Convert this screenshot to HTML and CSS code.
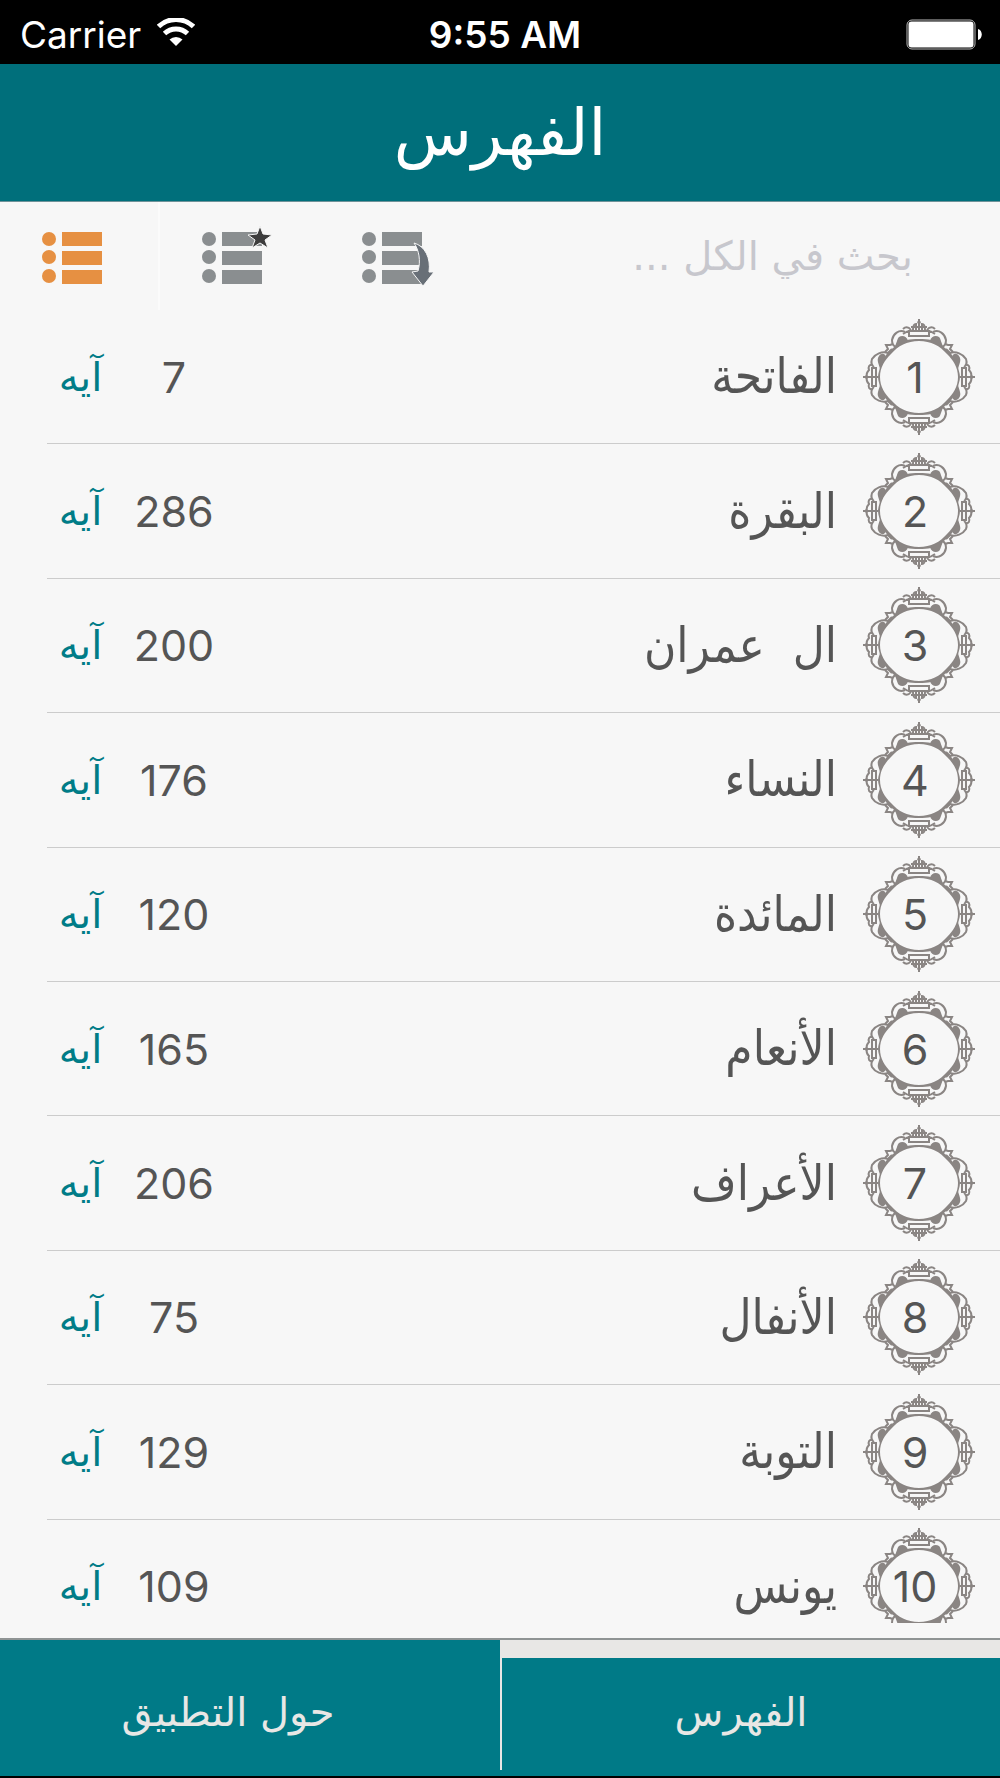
FILE: index.html
```html
<!DOCTYPE html>
<html lang="ar" dir="rtl">
<head>
    <meta charset="UTF-8">
    <meta name="viewport" content="width=device-width, initial-scale=1.0">
    <title>الفهرس</title>
    <link rel="stylesheet" href="styles.css">
</head>
<body>
    <svg class="defs" aria-hidden="true">
        <!-- one quarter of the frame, mirrored four times -->
        <g id="quarter">
            <path class="fill" d="M0 -38 C10 -38 15 -37 21 -33 L31 -25 L38 -14 C39 -8 41 -4 41 0 L39 0 C39 -10 34 -17 28 -23 C21 -31 12 -36 0 -36 Z"/>
            <path class="fill" d="M11 -36 C12 -41 17 -42 20 -40 C22 -38 22 -34 25 -29 Z"/>
            <path class="fill" d="M33 -20 C34 -24 38 -24 40 -21 C43 -17 40 -13 39 -8 Z"/>
            <path class="line" d="M14 -45 C20 -48 26 -43 27 -37 C27 -34 26 -31 23 -30"/>
            <path class="line" d="M31 -24 C37 -26 44 -23 47 -18 C48 -15 48 -12 45 -10"/>
            <path class="line" d="M26 -33 L29 -32 L33 -32 L31 -28 L34 -25 M27 -28 L31 -24"/>
            <path class="line" d="M0 -46 H10 V-41 H0 M8 -47 C11 -51 14 -50 16 -48 M11 -46 L16 -43"/>
            <path class="line" d="M3 -47 V-53 C5 -53 6 -51 6 -47 M0 -50 H8"/>
            <path class="line" d="M43 0 V-9 H47 V0 M46 -12 C50 -13 51 -10 50 -7 C52 -5 53 -3 52 0"/>
            <path class="fill" d="M0 -58 L1 -58 L1 -56 L2 -55 L1 -53 L1 -46 H0 Z"/>
            <path class="fill" d="M56 0 V-1 H54 L53 -2 L51 -1 H41 V0 Z"/>
        </g>
        <symbol id="frame" viewBox="-56 -58 112 116">
            <use href="#quarter"/>
            <use href="#quarter" transform="scale(-1 1)"/>
            <use href="#quarter" transform="scale(1 -1)"/>
            <use href="#quarter" transform="scale(-1 -1)"/>
        </symbol>
        <symbol id="list" viewBox="0 0 72 64">
            <circle cx="7" cy="15" r="7"/>
            <circle cx="7" cy="33" r="7"/>
            <circle cx="7" cy="52" r="7"/>
            <path d="M20 8h40v14H20zM20 27h40v14H20zM20 46h40v14H20z"/>
        </symbol>
    </svg>

    <div class="status" dir="ltr">
        <div class="carrier">
            <span>Carrier</span>
            <svg width="38" height="28" viewBox="0 0 38 28">
                <path d="M1.500 8.500A25.500 25.500 0 0 1 36.500 8.500M7.500 15.500A17 17 0 0 1 30.500 15.500" fill="none" stroke="#fff" stroke-width="5"/>
                <path d="M12.500 21.500A9.500 9.500 0 0 1 25.500 21.500L19 28z" fill="#fff"/>
            </svg>
        </div>
        <span class="time">9:55 AM</span>
        <svg class="battery" width="76" height="31" viewBox="0 0 76 31">
            <rect x="1" y="1" width="68" height="29" rx="5" fill="none" stroke="#bbb" stroke-width="1"/>
            <rect x="2.500" y="2.500" width="65" height="26" rx="3" fill="#fff"/>
            <path d="M72 10C77 11 77 20 72 21z" fill="#fff"/>
        </svg>
    </div>

    <header class="header">
        <h1>الفهرس</h1>
    </header>

    <div class="toolbar">
        <input type="search" class="search" placeholder="بحث في الكل ..." aria-label="بحث في الكل">
        <button type="button" class="tool" aria-label="الأخيرة">
            <svg width="72" height="64">
                <use href="#list"/>
                <path class="arrow" d="M52 19C63 22 69 34 67 48L72 48L61 62L50 48L56 47C59 37 57 26 52 19z"/>
            </svg>
        </button>
        <button type="button" class="tool" aria-label="المفضلة">
            <svg width="72" height="64">
                <use href="#list"/>
                <path class="star" d="M58 2L61 10L70 11L63 16L66 24L58 19L50 24L53 16L46 11L55 10z"/>
            </svg>
        </button>
        <button type="button" class="tool selected" aria-label="الكل">
            <svg width="72" height="64"><use href="#list"/></svg>
        </button>
    </div>

    <main class="content">
        <ol class="suras">
            <li class="sura">
                <div class="badge"><svg><use href="#frame"/></svg><span>1</span></div>
                <a href="#1" class="name">الفاتحة</a>
                <span class="count">7</span>
                <span class="unit">آيه</span>
            </li>
            <li class="sura">
                <div class="badge"><svg><use href="#frame"/></svg><span>2</span></div>
                <a href="#2" class="name">البقرة</a>
                <span class="count">286</span>
                <span class="unit">آيه</span>
            </li>
            <li class="sura">
                <div class="badge"><svg><use href="#frame"/></svg><span>3</span></div>
                <a href="#3" class="name">ال  عمران</a>
                <span class="count">200</span>
                <span class="unit">آيه</span>
            </li>
            <li class="sura">
                <div class="badge"><svg><use href="#frame"/></svg><span>4</span></div>
                <a href="#4" class="name">النساء</a>
                <span class="count">176</span>
                <span class="unit">آيه</span>
            </li>
            <li class="sura">
                <div class="badge"><svg><use href="#frame"/></svg><span>5</span></div>
                <a href="#5" class="name">المائدة</a>
                <span class="count">120</span>
                <span class="unit">آيه</span>
            </li>
            <li class="sura">
                <div class="badge"><svg><use href="#frame"/></svg><span>6</span></div>
                <a href="#6" class="name">الأنعام</a>
                <span class="count">165</span>
                <span class="unit">آيه</span>
            </li>
            <li class="sura">
                <div class="badge"><svg><use href="#frame"/></svg><span>7</span></div>
                <a href="#7" class="name">الأعراف</a>
                <span class="count">206</span>
                <span class="unit">آيه</span>
            </li>
            <li class="sura">
                <div class="badge"><svg><use href="#frame"/></svg><span>8</span></div>
                <a href="#8" class="name">الأنفال</a>
                <span class="count">75</span>
                <span class="unit">آيه</span>
            </li>
            <li class="sura">
                <div class="badge"><svg><use href="#frame"/></svg><span>9</span></div>
                <a href="#9" class="name">التوبة</a>
                <span class="count">129</span>
                <span class="unit">آيه</span>
            </li>
            <li class="sura">
                <div class="badge"><svg><use href="#frame"/></svg><span>10</span></div>
                <a href="#10" class="name">يونس</a>
                <span class="count">109</span>
                <span class="unit">آيه</span>
            </li>
        </ol>
    </main>

    <nav class="tabs">
        <a href="#index" class="tab active">الفهرس</a>
        <a href="#about" class="tab">حول التطبيق</a>
    </nav>
</body>
</html>
```
FILE: styles.css
```css
* {
    box-sizing: border-box;
}
body {
    margin: 0;
    height: 100vh;
    display: flex;
    flex-direction: column;
    background: #f7f7f7;
    color: #555;
    font-family: Inter, "DejaVu Sans", sans-serif;
}
a {
    color: inherit;
    text-decoration: none;
}
.defs {
    position: absolute;
    width: 0;
    height: 0;
}
.status {
    display: grid;
    grid-template-columns: 1fr auto 1fr;
    align-items: center;
    height: 64px;
    padding: 4px 18px 0 20px;
    background: #000;
    color: #fff;
    font-size: 37px;
}
.carrier {
    display: flex;
    align-items: center;
    gap: 16px;
}
.carrier svg {
    margin-bottom: 4px;
}
.time {
    padding-left: 8px;
    font-weight: 600;
}
.battery {
    justify-self: end;
}
.header {
    height: 138px;
    display: flex;
    align-items: center;
    justify-content: center;
    background: #006f7b;
    border-bottom: 1px solid #6f9399;
}
h1 {
    margin: 0;
    color: #fff;
    font-family: "DejaVu Sans", sans-serif;
    font-size: 64px;
    font-weight: normal;
    line-height: 72px;
}
.toolbar {
    display: flex;
    height: 108px;
}
.search {
    flex: 1;
    min-width: 0;
    padding: 0 87px 0 20px;
    border: none;
    background: none;
    color: #555;
    font-family: "DejaVu Sans", sans-serif;
    font-size: 40px;
}
.search::placeholder {
    color: #c7c7cd;
    opacity: 1;
}
.tool {
    display: flex;
    align-items: center;
    justify-content: flex-end;
    width: 160px;
    padding: 0 0 0 42px;
    border: none;
    background: none;
    cursor: pointer;
    fill: #8a8e90;
}
.tool.selected {
    border-right: 2px solid #fbfbfb;
    fill: #e69042;
}
.star {
    fill: #3d3d3d;
    stroke: #f7f7f7;
    stroke-width: 1;
}
.arrow {
    fill: #686f77;
    stroke: #f7f7f7;
    stroke-width: 1;
}
.content {
    flex: 1;
    min-height: 0;
    margin-bottom: 15px;
    overflow: hidden;
}
/* the last row runs past the visible area */
.suras {
    height: calc(100% + 31px);
    display: grid;
    grid-auto-rows: 1fr;
    margin: 0;
    padding: 0 0 0 47px;
    list-style: none;
}
.sura {
    display: flex;
    align-items: center;
    padding-right: 25px;
    border-bottom: 1px solid #ccc;
}
.badge {
    display: grid;
    place-items: center;
    width: 112px;
    height: 116px;
    font-size: 43px;
}
.badge svg, .badge span {
    grid-area: 1 / 1;
}
.badge svg {
    width: 112px;
    height: 116px;
}
.badge span {
    padding-right: 8px;
}
.fill {
    fill: #8a8583;
}
.line {
    fill: none;
    stroke: #8a8583;
    stroke-width: 2;
}
.name {
    flex: 1;
    padding-right: 26px;
    font-family: "DejaVu Sans Condensed", "DejaVu Sans", sans-serif;
    font-size: 49px;
    white-space: pre;
}
.count {
    width: 120px;
    font-size: 43px;
    text-align: center;
}
.unit {
    width: 67px;
    color: #007c87;
    font-family: "DejaVu Sans", sans-serif;
    font-size: 40px;
    text-align: center;
}
.tabs {
    display: grid;
    grid-template-columns: 1fr 1fr;
    height: 140px;
    background: #007a87;
    border-top: 2px solid #8f9494;
    border-bottom: 2px solid #000;
}
.tab {
    display: flex;
    align-items: flex-end;
    justify-content: center;
    margin-bottom: 6px;
    padding: 0 44px 34px 0;
    color: #e8e7e5;
    font-family: "DejaVu Sans", sans-serif;
    font-size: 40px;
    line-height: 48px;
}
.tab.active {
    padding-right: 20px;
    border-top: 18px solid #e8e7e5;
    border-left: 2px solid #e8e7e5;
}
```
